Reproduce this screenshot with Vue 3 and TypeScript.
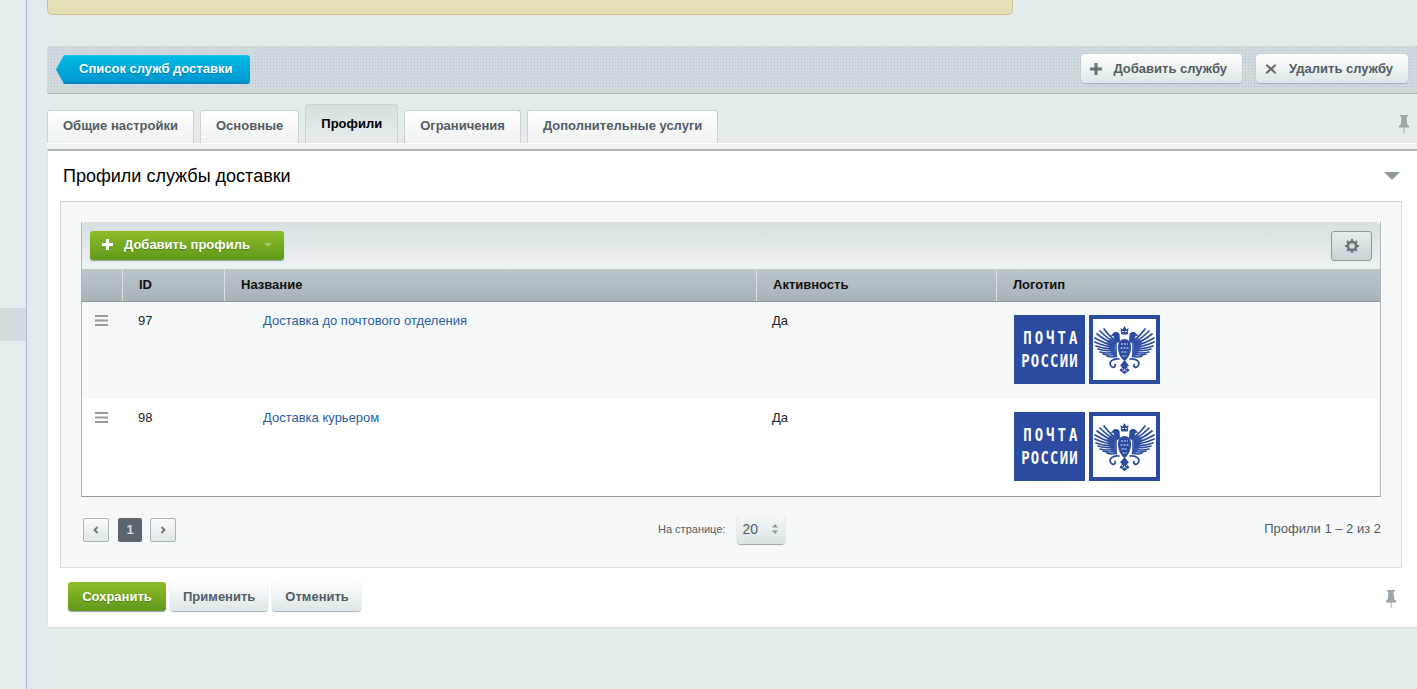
<script setup lang="ts">
const tabs = [
  { name: 'Общие настройки', active: false },
  { name: 'Основные', active: false },
  { name: 'Профили', active: true },
  { name: 'Ограничения', active: false },
  { name: 'Дополнительные услуги', active: false },
]

const columns = ['', 'ID', 'Название', 'Активность', 'Логотип']

const profiles = [
  { id: 97, name: 'Доставка до почтового отделения', active: 'Да' },
  { id: 98, name: 'Доставка курьером', active: 'Да' },
]

// left wing of the eagle as [from, to] points, the right one is mirrored
const wing: number[][] = [
  [27, 26, 15, 14],
  [26, 27.5, 11, 16],
  [25.5, 29, 8, 19],
  [25, 30.5, 6, 23],
  [25, 32, 6, 27],
  [25, 33.5, 7, 31],
  [25.5, 35, 9, 34],
  [26, 37, 11, 37],
  [26.5, 39, 14, 39],
  [27.5, 41, 18, 41],
]

const feathers = wing.map(([x1, y1, x2, y2]) => {
  const cx = (x1 + x2) / 2
  const cy = (y1 + y2) / 2 + 2
  return `M${x1} ${y1}Q${cx} ${cy} ${x2} ${y2}`
})
</script>

<template>
  <div class="page">
    <aside class="side">
      <div class="side-item"></div>
    </aside>

    <main class="main">
      <div class="notice"></div>

      <div class="topbar">
        <a class="back-btn">Список служб доставки</a>
        <div class="topbar-actions">
          <a class="btn btn-icon">
            <svg width="12" height="12" viewBox="0 0 12 12"><path d="M4.500 0h3v4.500H12v3H7.500V12h-3V7.500H0v-3h4.500z" fill="#69747a" /></svg>
            Добавить службу
          </a>
          <a class="btn btn-icon btn-del">
            <svg width="12" height="12" viewBox="0 0 12 12"><path d="M2 1l4 3.600L10 1l1.400 1.400L7.800 6l3.600 3.600L10 11 6 7.400 2 11 .6 9.600 4.200 6 .6 2.400z" fill="#69747a" /></svg>
            Удалить службу
          </a>
        </div>
      </div>

      <div class="tabs">
        <div v-for="tab in tabs" :key="tab.name" class="tab" :class="{ active: tab.active }">{{ tab.name }}</div>
        <svg class="pin tabs-pin" width="12" height="18" viewBox="0 0 12 18"><path d="M2 0h8v1.500H8.600l.5 7.500 2 2v1.500H6.500V18h-1v-5.500H.9V11l2-2 .5-7.500H2z" fill="#9aa6ab" /></svg>
      </div>
      <div class="tabs-line"></div>

      <section class="panel">
        <div class="panel-head">
          <h2>Профили службы доставки</h2>
          <span class="collapse"></span>
        </div>

        <div class="box">
          <div class="grid">
            <div class="grid-toolbar">
              <a class="add-btn">
                <svg width="11" height="11" viewBox="0 0 11 11"><path d="M4 0h3v4h4v3H7v4H4V7H0V4h4z" fill="#fff" /></svg>
                <span>Добавить профиль</span>
                <i class="add-caret"></i>
              </a>
              <a class="gear-btn">
                <svg width="14" height="14" viewBox="0 0 14 14">
                  <circle cx="7" cy="7" r="4.200" fill="none" stroke="#6c767b" stroke-width="2.800" />
                  <path d="M7 0v14M0 7h14M2 2l10 10M12 2L2 12" stroke="#6c767b" stroke-width="2" stroke-dasharray="2.400 9.200" />
                </svg>
              </a>
            </div>

            <div class="grid-row grid-header">
              <div v-for="col in columns" :key="col" class="head-cell">{{ col }}</div>
            </div>

            <div v-for="(item, i) in profiles" :key="item.id" class="grid-row data-row" :class="{ odd: i === 0 }">
              <div class="cell cell-menu">
                <svg width="13" height="11" viewBox="0 0 13 11"><path d="M0 0h13v2H0zM0 4.500h13v2H0zM0 9h13v2H0z" fill="#929ca1" /></svg>
              </div>
              <div class="cell">{{ item.id }}</div>
              <div class="cell cell-name"><a>{{ item.name }}</a></div>
              <div class="cell">{{ item.active }}</div>
              <div class="cell cell-logo">
                <div class="logo">
                  <div class="logo-text"><span class="line-top">ПОЧТА</span><span class="line-bottom">РОССИИ</span></div>
                  <div class="logo-eagle">
                    <svg width="63" height="61" viewBox="4 4 63 61">
                      <g fill="none" stroke="#2b4ba0" stroke-width="1.700" stroke-linecap="round">
                        <path v-for="d in feathers" :key="d" :d="d" />
                        <g transform="matrix(-1 0 0 1 71 0)">
                          <path v-for="d in feathers" :key="d" :d="d" />
                        </g>
                        <!-- legs curling below the wings -->
                        <path d="M30 44C24 43 19 47 22 51c2 2.500 5 1 4-1.500" />
                        <path d="M41 44c6-1 11 3 8 7-2 2.500-5 1-4-1.500" />
                      </g>
                      <g fill="#2b4ba0">
                        <path d="M28 24l-6-1-4 4 2 7 3 6 5 3z" opacity="0.800" />
                        <path d="M43 24l6-1 4 4-2 7-3 6-5 3z" opacity="0.800" />
                        <path d="M35.500 24c4 0 6.500 3 6.500 8s-2 11-6.500 14c-4.500-3-6.500-9-6.500-14s2.500-8 6.500-8z" />
                        <path d="M30.500 19c-2-2.500-5-2.500-6.500-.5l-2.500 2 3 .5c0 2 1.500 3 2.500 4.500 1 1.200 1 2 .5 3l3.500-2z" />
                        <path d="M40.500 19c2-2.500 5-2.500 6.500-.5l2.500 2-3 .5c0 2-1.500 3-2.500 4.500-1 1.200-1 2-.5 3l-3.500-2z" />
                        <path d="M31.500 13l2 1.500 2-3.500 2 3.500 2-1.500-.8 6.500h-6.400z" />
                        <path d="M35.500 45l4.500 5.500-2 1.500 2.500 3.500-5 3.500-5-3.500 2.500-3.500-2-1.500z" />
                      </g>
                      <g fill="none" stroke="#fff" stroke-width="0.900">
                        <path d="M32 29h7M31.500 33h8M32.500 37h6M33.500 41h4M32.500 53l6 4M38.500 53l-6 4M33 16.500h5" stroke-dasharray="2 1" />
                      </g>
                    </svg>
                  </div>
                </div>
              </div>
            </div>
          </div>

          <div class="pager">
            <div class="pages">
              <a class="page-btn">
                <svg width="6" height="8" viewBox="0 0 6 8"><path d="M4.500 1L1.500 4l3 3" fill="none" stroke="#69747a" stroke-width="1.800" /></svg>
              </a>
              <span class="page-num">1</span>
              <a class="page-btn page-next">
                <svg width="6" height="8" viewBox="0 0 6 8"><path d="M1.500 1l3 3-3 3" fill="none" stroke="#69747a" stroke-width="1.800" /></svg>
              </a>
            </div>
            <div class="per-page">
              <span class="per-label">На странице:</span>
              <div class="per-select">
                <span>20</span>
                <svg width="6" height="10" viewBox="0 0 6 10"><path d="M3 0l3 3.500H0zM3 10L0 6.500h6z" fill="#8b969b" /></svg>
              </div>
            </div>
            <div class="total">Профили 1 – 2 из 2</div>
          </div>
        </div>

        <div class="footer">
          <a class="save-btn">Сохранить</a>
          <a class="btn btn-foot">Применить</a>
          <a class="btn btn-foot">Отменить</a>
          <svg class="pin" width="12" height="18" viewBox="0 0 12 18"><path d="M2 0h8v1.500H8.600l.5 7.500 2 2v1.500H6.500V18h-1v-5.500H.9V11l2-2 .5-7.500H2z" fill="#9aa6ab" /></svg>
        </div>
      </section>
    </main>
  </div>
</template>

<style>
html,
body {
  margin: 0;
  overflow: hidden;
}
</style>

<style scoped>
.page {
  display: flex;
  height: 689px;
  background: #e4ebed;
  font-family: 'Liberation Sans', Arial, sans-serif;
  font-size: 13px;
  color: #000;
}

.side {
  width: 26px;
  flex: none;
  padding-top: 308px;
  border-right: 1px solid #a9bcd6;
  background: #e6edee;
}

.side-item {
  height: 33px;
  background: #d3dcdf;
}

.main {
  flex: 1;
  min-width: 0;
  padding-left: 20px;
}

.notice {
  width: 964px;
  height: 14px;
  background: #e4e0b6;
  border: 1px solid #cbc38d;
  border-top: none;
  border-radius: 0 0 5px 5px;
}

.topbar {
  margin-top: 31px;
  height: 47px;
  display: flex;
  align-items: center;
  justify-content: space-between;
  padding: 0 9px;
  background-color: #d0d9dd;
  background-image: radial-gradient(#bcc7cb 0.8px, transparent 0.9px);
  background-size: 3px 3px;
  border-bottom: 1px solid #a9b5b9;
  border-radius: 3px 0 0 3px;
}

.back-btn {
  width: 194px;
  height: 29px;
  box-sizing: border-box;
  padding-left: 23px;
  line-height: 27px;
  font-weight: bold;
  color: #fff;
  text-shadow: 0 1px 1px #0a7aa8;
  background: linear-gradient(#26c6ea 0, #00b9e4 2px, #0197d0 27px, #0183b5 28px);
  border-radius: 0 3px 3px 0;
  clip-path: polygon(8px 0, 100% 0, 100% 100%, 8px 100%, 0 50%);
}

.topbar-actions {
  display: flex;
  gap: 14px;
  margin-top: -2px;
}

.btn {
  display: flex;
  align-items: center;
  box-sizing: border-box;
  height: 29px;
  font-weight: bold;
  color: #535c62;
  background: linear-gradient(#fff, #dde6e9);
  border-radius: 4px;
  box-shadow: 0 1px 1px #a4b0b5, 0 0 1px #c0cace;
}

.btn-icon {
  padding: 0 15px 0 9px;
  gap: 11px;
}

.btn-del {
  gap: 12px;
}

.tabs {
  margin-top: 10px;
  height: 39px;
  display: flex;
  align-items: flex-end;
  gap: 6px;
  position: relative;
}

.tab {
  height: 33px;
  box-sizing: border-box;
  padding: 0 15px;
  line-height: 29px;
  font-weight: bold;
  color: #535c62;
  background: linear-gradient(#fff, #eef2f3);
  border: 1px solid #c9d3d6;
  border-bottom: none;
  border-radius: 3px 3px 0 0;
}

.tab.active {
  height: 39px;
  line-height: 38px;
  color: #000;
  background: linear-gradient(#d5dfe1, #e7edef);
}

.pin {
  position: absolute;
}

.tabs-pin {
  right: 7px;
  top: 11px;
}

.tabs-line {
  height: 5px;
  background: #eef2f4;
  border-top: 1px solid #fff;
}

.panel {
  background: #fff;
  border-top: 2px solid #a9b4b8;
  border-bottom: 1px solid #d3dcdf;
  border-left: 1px solid #dfe6e8;
  height: 479px;
  box-sizing: border-box;
}

.panel-head {
  height: 50px;
  display: flex;
  align-items: center;
  justify-content: space-between;
  padding: 0 17px 0 15px;
  box-sizing: border-box;
}

h2 {
  margin: 0;
  font-weight: normal;
  font-size: 18px;
  color: #000;
}

.collapse {
  width: 0;
  height: 0;
  border-left: 8px solid transparent;
  border-right: 8px solid transparent;
  border-top: 8px solid #8f9a9f;
}

.box {
  margin: 0 15px 0 12px;
  height: 367px;
  box-sizing: border-box;
  padding: 20px 20px 0;
  background: #f5f9f9;
  border: 1px solid #d5dfe3;
  border-top-color: #c6d0d3;
}

.grid {
  border: 1px solid #adb7bb;
  border-top: none;
  border-bottom-color: #8f9a9f;
  background: #fff;
}

.grid-toolbar {
  height: 47px;
  box-sizing: border-box;
  display: flex;
  align-items: flex-start;
  justify-content: space-between;
  padding: 9px 8px 0;
  background: linear-gradient(#d5dfe2, #eef2f4);
  border-radius: 4px 4px 0 0;
}

.add-btn {
  width: 194px;
  height: 29px;
  display: flex;
  align-items: center;
  box-sizing: border-box;
  padding: 0 0 2px 12px;
  font-weight: bold;
  color: #fff;
  text-shadow: 0 1px 1px #4f7f14;
  background: linear-gradient(#8dbc2a, #5f9a1c);
  border-radius: 3px;
  box-shadow: 0 1px 1px #93a0a5;
}

.add-btn span {
  margin-left: 11px;
}

.add-caret {
  margin-left: 14px;
  width: 0;
  height: 0;
  border-left: 4px solid transparent;
  border-right: 4px solid transparent;
  border-top: 4px solid #a4c960;
}

.gear-btn {
  width: 41px;
  height: 30px;
  box-sizing: border-box;
  display: flex;
  align-items: center;
  justify-content: center;
  background: linear-gradient(#e6edef, #c8d2d6);
  border: 1px solid #8d999e;
  border-radius: 3px;
}

.grid-row {
  display: grid;
  grid-template-columns: 40px 102px 532px 240px 1fr;
}

.grid-header {
  height: 33px;
  background: linear-gradient(#bcc7cb, #a7b3b8);
  border-bottom: 1px solid #8f9a9f;
  box-sizing: border-box;
}

.head-cell {
  padding-left: 16px;
  line-height: 31px;
  font-weight: bold;
  border-left: 1px solid #d8e0e2;
  color: #111;
}

.head-cell:first-child {
  border-left: none;
}

.data-row {
  height: 97px;
}

.data-row.odd {
  background: #f5f9f9;
}

.cell {
  padding: 11px 0 0 16px;
  line-height: 15px;
  color: #222;
}

.cell-menu {
  padding: 12px 0 0 13px;
}

.cell-name {
  padding-left: 39px;
}

.cell-name a {
  color: #2a5d9f;
}

.cell-logo {
  padding: 13px 0 0 18px;
}

.logo {
  display: flex;
  gap: 4px;
  width: 146px;
  height: 69px;
}

.logo-text {
  width: 71px;
  display: flex;
  flex-direction: column;
  align-items: center;
  justify-content: center;
  background: #2b4ba0;
  color: #fff;
  font-family: 'DejaVu Sans Mono', monospace;
  font-weight: bold;
  font-size: 17.500px;
  line-height: 23px;
}

.logo-text span {
  display: block;
  white-space: nowrap;
  transform: scaleX(0.8);
}

.line-top {
  letter-spacing: 3.800px;
  margin-right: -3.800px;
}

.line-bottom {
  letter-spacing: 1.500px;
  margin-right: -1.500px;
}

.logo-eagle {
  width: 71px;
  box-sizing: border-box;
  border: 4px solid #2b4ba0;
  background: #fff;
  display: flex;
}

.pager {
  margin-top: 17px;
  height: 32px;
  display: flex;
  align-items: center;
  padding-left: 2px;
}

.pages {
  width: 575px;
  display: flex;
  gap: 9px;
  flex: none;
}

.page-next {
  margin-left: -1px;
}

.page-btn {
  width: 26px;
  height: 24px;
  box-sizing: border-box;
  display: flex;
  align-items: center;
  justify-content: center;
  background: linear-gradient(#f7fafa, #dfe7ea);
  border: 1px solid #a9b5ba;
  border-radius: 2px;
}

.page-num {
  width: 24px;
  height: 24px;
  line-height: 24px;
  text-align: center;
  font-weight: bold;
  color: #d6dde0;
  background: #5d666c;
  border-radius: 2px;
}

.per-page {
  display: flex;
  align-items: center;
  gap: 12px;
}

.per-label {
  padding-bottom: 2px;
  font-size: 11px;
  color: #535c62;
}

.per-select {
  width: 48px;
  height: 30px;
  margin-bottom: 2px;
  box-sizing: border-box;
  display: flex;
  align-items: center;
  justify-content: space-between;
  padding: 0 7px 0 5px;
  font-size: 14px;
  color: #535c62;
  background: linear-gradient(#f5f8f9, #dae3e6);
  border-radius: 4px;
  box-shadow: 0 1px 1px #98a4a9, 0 0 1px #b4bfc3;
}

.total {
  margin-left: auto;
  padding-bottom: 4px;
  color: #535c62;
}

.footer {
  position: relative;
  display: flex;
  gap: 3px;
  margin-top: 14px;
  padding-left: 20px;
}

.save-btn {
  width: 98px;
  height: 29px;
  line-height: 29px;
  text-align: center;
  font-weight: bold;
  color: #fff;
  text-shadow: 0 1px 1px #4f7f14;
  background: linear-gradient(#8dbc2a, #5f9a1c);
  border-radius: 3px;
  box-shadow: 0 1px 1px #93a0a5;
  margin-right: 1px;
}

.btn-foot {
  padding: 0 13px;
}

.btn-foot + .btn-foot {
  margin-left: 1px;
  padding: 0 12px 0 13px;
}

.footer .pin {
  right: 20px;
  top: 8px;
}
</style>
